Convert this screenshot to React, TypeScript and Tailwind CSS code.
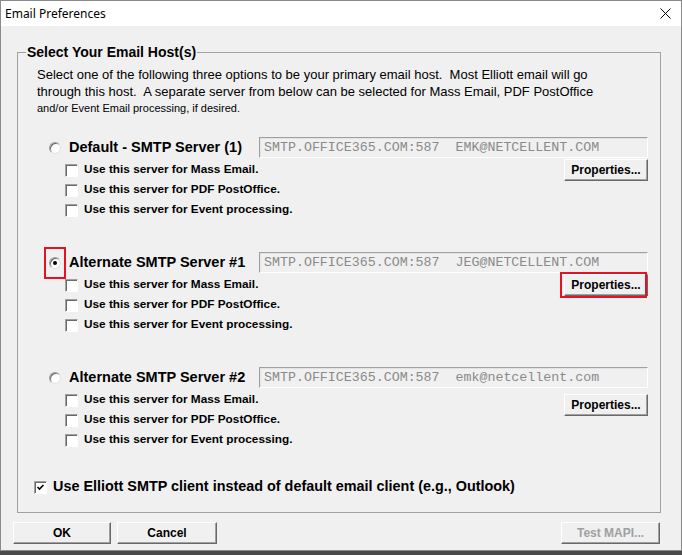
import React from 'react';

const font = { fontFamily: '"Liberation Sans", Arial, sans-serif' };

function Radio({ checked }: { checked?: boolean }) {
  return (
    <span className="relative inline-block w-[12px] h-[12px] rounded-full bg-white border border-t-[#a0a0a0] border-l-[#a0a0a0] border-r-[#e3e3e3] border-b-[#e3e3e3] shadow-[inset_1px_1px_#696969] shrink-0">
      {checked && <span className="absolute left-[3px] top-[3px] w-[4px] h-[4px] rounded-full bg-black" />}
    </span>
  );
}

function Check({ checked }: { checked?: boolean }) {
  return (
    <span className="relative inline-flex items-center justify-center w-[13px] h-[13px] bg-white border border-t-[#a0a0a0] border-l-[#a0a0a0] border-r-white border-b-white shadow-[inset_1px_1px_#696969] shrink-0">
      {checked && (
        <svg width="9" height="9" viewBox="0 0 9 9">
          <path d="M1.5 4 L3.5 6 L7.5 2" stroke="#000" strokeWidth="1.6" fill="none" />
        </svg>
      )}
    </span>
  );
}

function Btn({ children, className = '', disabled }: { children: React.ReactNode; className?: string; disabled?: boolean }) {
  return (
    <button
      className={`h-[22px] bg-[#f0f0f0] border border-t-white border-l-white border-r-[#696969] border-b-[#696969] shadow-[inset_-1px_-1px_#a0a0a0] text-[12px] font-bold leading-none ${disabled ? 'text-[#a0a0a0]' : 'text-black'} ${className}`}
      style={font}
    >
      {children}
    </button>
  );
}

const servers = [
  { label: 'Default - SMTP Server (1)', host: 'SMTP.OFFICE365.COM:587  EMK@NETCELLENT.COM', selected: false, btnShift: 0 },
  { label: 'Alternate SMTP Server #1', host: 'SMTP.OFFICE365.COM:587  JEG@NETCELLENT.COM', selected: true, btnShift: 0 },
  { label: 'Alternate SMTP Server #2', host: 'SMTP.OFFICE365.COM:587  emk@netcellent.com', selected: false, btnShift: 5 },
];

const uses = ['Use this server for Mass Email.', 'Use this server for PDF PostOffice.', 'Use this server for Event processing.'];

function ServerBlock({ s }: { s: typeof servers[0] }) {
  return (
    <div className="flex flex-col">
      <div className="flex items-center h-[21px]">
        <div className={`w-[22px] h-[32px] ml-[26px] flex items-center justify-center ${s.selected ? 'border-2 border-[#e81123]' : 'border-2 border-transparent'}`}>
          <Radio checked={s.selected} />
        </div>
        <span className="ml-[3px] w-[190px] text-[14.5px] font-bold text-black whitespace-nowrap" style={font}>{s.label}</span>
        <div className="w-[389px] h-[21px] flex items-center pl-[4px] bg-[#f0f0f0] border border-t-[#a0a0a0] border-l-[#a0a0a0] border-r-white border-b-white shadow-[inset_1px_1px_#e3e3e3]">
          <span className="text-[13.3px] text-[#8a8a8a] whitespace-pre" style={{ fontFamily: '"Liberation Mono", "Courier New", monospace' }}>{s.host}</span>
        </div>
      </div>
      <div className="flex flex-col mt-[2px]">
        {uses.map((u, i) => (
          <div key={u} className="flex items-center h-[20px] pl-[47px]">
            <Check />
            <span className="ml-[6px] text-[11.8px] font-bold text-black whitespace-nowrap" style={font}>{u}</span>
            {i === 0 && (
              <div className="relative ml-auto mr-[12px] -my-[1px]" style={{ top: s.btnShift }}>
                <Btn className="w-[84px] block">Properties...</Btn>
                {s.selected && (
                  <div className="absolute left-[-4px] right-[1px] top-[-2px] bottom-[-2px] border-2 border-[#e81123]" />
                )}
              </div>
            )}
          </div>
        ))}
      </div>
    </div>
  );
}

export default function App() {
  return (
    <div className="w-[682px] h-[555px] bg-[#4a4a4a] overflow-hidden">
      <div className="w-[682px] h-[551px] border border-[#8a8a8a] bg-[#f0f0f0] flex flex-col">
        <div className="h-[25px] bg-white flex items-center justify-between pl-[4px] pr-[10px]">
          <span className="text-[12px] text-black" style={{ fontFamily: '"Noto Sans", "Liberation Sans", sans-serif' }}>Email Preferences</span>
          <svg width="11" height="11" viewBox="0 0 11 11">
            <path d="M0.5 0.5 L10.5 10.5 M10.5 0.5 L0.5 10.5" stroke="#000" strokeWidth="1" />
          </svg>
        </div>
        <div className="flex-1 pl-[16px] pr-[20px] pt-[16px]">
          <fieldset className="border border-[#a0a0a0] h-[471px]">
            <legend className="ml-[8px] px-[1px] text-[14px] font-bold text-black" style={font}>Select Your Email Host(s)</legend>
            <div className="pl-[19px] pt-[3px] text-[13px] leading-[17px] text-black" style={font}>
              <div>Select one of the following three options to be your primary email host.&nbsp; Most Elliott email will go</div>
              <div>through this host.&nbsp; A separate server from below can be selected for Mass Email, PDF PostOffice</div>
              <div className="text-[11px] leading-[17px]">and/or Event Email processing, if desired.</div>
            </div>
            <div className="flex flex-col gap-[32px] mt-[20px]">
              {servers.map(s => (
                <ServerBlock key={s.label} s={s} />
              ))}
            </div>
            <div className="flex items-center h-[20px] mt-[27px] pl-[16px]">
              <Check checked />
              <span className="ml-[6px] text-[14.4px] font-bold text-black whitespace-nowrap" style={font}>Use Elliott SMTP client instead of default email client (e.g., Outlook)</span>
            </div>
          </fieldset>
          <div className="flex items-center mt-[9px] -ml-[4px] mr-[1px]">
            <Btn className="w-[98px]">OK</Btn>
            <Btn className="w-[100px] ml-[6px]">Cancel</Btn>
            <Btn className="w-[99px] ml-auto" disabled>Test MAPI...</Btn>
          </div>
        </div>
      </div>
    </div>
  );
}
